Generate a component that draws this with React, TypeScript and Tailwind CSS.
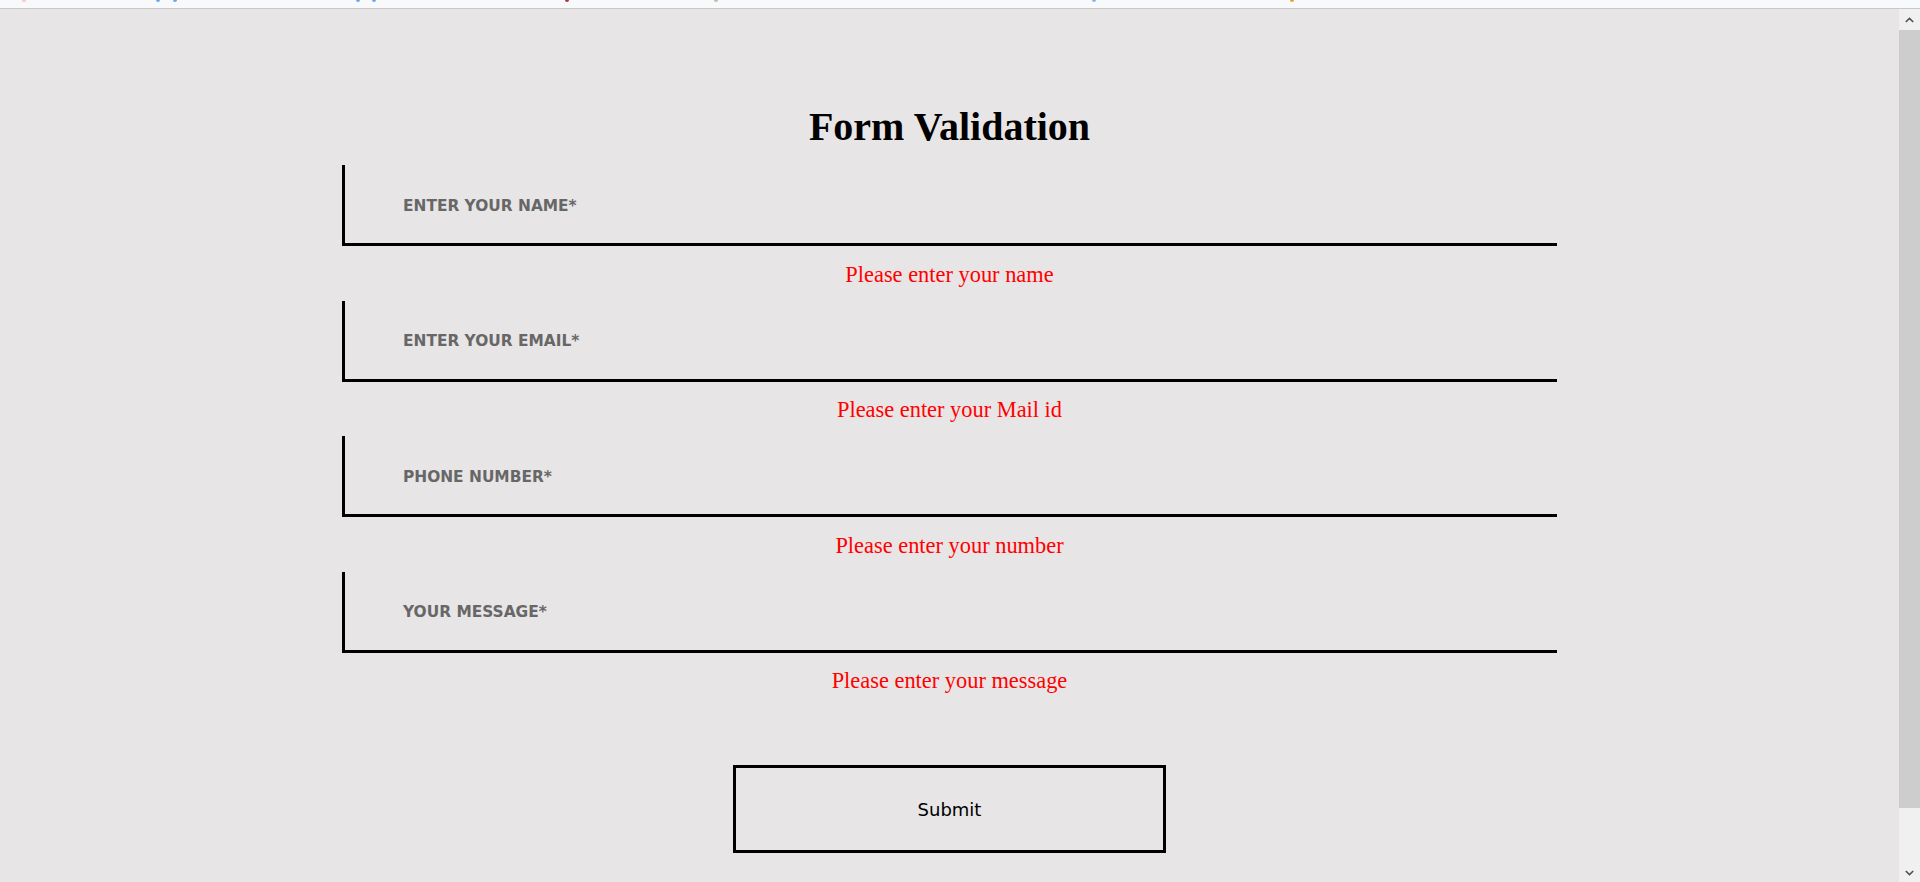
import React from "react";

const fields = [
  { label: "ENTER YOUR NAME*", error: "Please enter your name" },
  { label: "ENTER YOUR EMAIL*", error: "Please enter your Mail id" },
  { label: "PHONE NUMBER*", error: "Please enter your number" },
  { label: "YOUR MESSAGE*", error: "Please enter your message" },
];

const dots = [
  { x: 22, c: "bg-[#f7c6cf]" },
  { x: 156, c: "bg-[#6aa8f0]" },
  { x: 173, c: "bg-[#6aa8f0]" },
  { x: 356, c: "bg-[#6aa8f0]" },
  { x: 372, c: "bg-[#6aa8f0]" },
  { x: 565, c: "bg-[#b5363b]" },
  { x: 714, c: "bg-[#b9bcb0]" },
  { x: 1092, c: "bg-[#8ab6e6]" },
  { x: 1290, c: "bg-[#f29a2e]" },
];

export default function App() {
  return (
    <div className="h-[882px] w-[1920px] overflow-hidden flex flex-col bg-[#e7e5e6]">
      {/* cut-off browser/page strip at top */}
      <div className="relative h-[8px] bg-[#f8f9fa] border-b border-[#c8c8c8] box-content shrink-0">
        {dots.map((d, i) => (
          <span
            key={i}
            className={`absolute top-0 h-[2px] w-[4px] rounded-b-sm ${d.c}`}
            style={{ left: d.x }}
          />
        ))}
      </div>
      <div className="flex flex-1 min-h-0">
        <main className="flex-1 flex flex-col items-center">
          <h1 className="mt-[94px] text-[40px] leading-[48px] font-bold text-black [font-family:'Liberation_Serif','Times_New_Roman',serif]">
            Form Validation
          </h1>
          <form className="mt-[14px] w-[1215px] flex flex-col items-center">
            {fields.map((f) => (
              <div key={f.label} className="w-full flex flex-col items-center mb-[13px]">
                <div className="w-full h-[81px] border-l-[3px] border-b-[3px] border-black flex items-center pl-[58px] pt-[5px]">
                  <span className="text-[15.4px] font-bold text-[#676767] [font-family:'DejaVu_Sans',Verdana,sans-serif]">
                    {f.label}
                  </span>
                </div>
                <p className="mt-[15.5px] text-[22.4px] leading-[26px] text-[#ff0000] [font-family:'Liberation_Serif','Times_New_Roman',serif]">
                  {f.error}
                </p>
              </div>
            ))}
            <button
              type="button"
              className="mt-[58px] w-[433px] h-[88px] border-[3px] border-black bg-transparent text-black text-[18px] [font-family:'DejaVu_Sans',Tahoma,sans-serif]"
            >
              Submit
            </button>
          </form>
        </main>
        {/* scrollbar */}
        <div className="w-[21px] shrink-0 bg-[#f0f0f0] flex flex-col">
          <div className="h-[21px] flex items-center justify-center">
            <svg width="9" height="6" viewBox="0 0 9 6">
              <path d="M0.8 5 L4.5 1.4 L8.2 5" fill="none" stroke="#505050" strokeWidth="1.6" />
            </svg>
          </div>
          <div className="mx-auto w-[21px] h-[778px] bg-[#cdcdcd]" />
          <div className="flex-1 flex items-end justify-center pb-[6px]">
            <svg width="9" height="6" viewBox="0 0 9 6">
              <path d="M0.8 1 L4.5 4.6 L8.2 1" fill="none" stroke="#505050" strokeWidth="1.6" />
            </svg>
          </div>
        </div>
      </div>
    </div>
  );
}
